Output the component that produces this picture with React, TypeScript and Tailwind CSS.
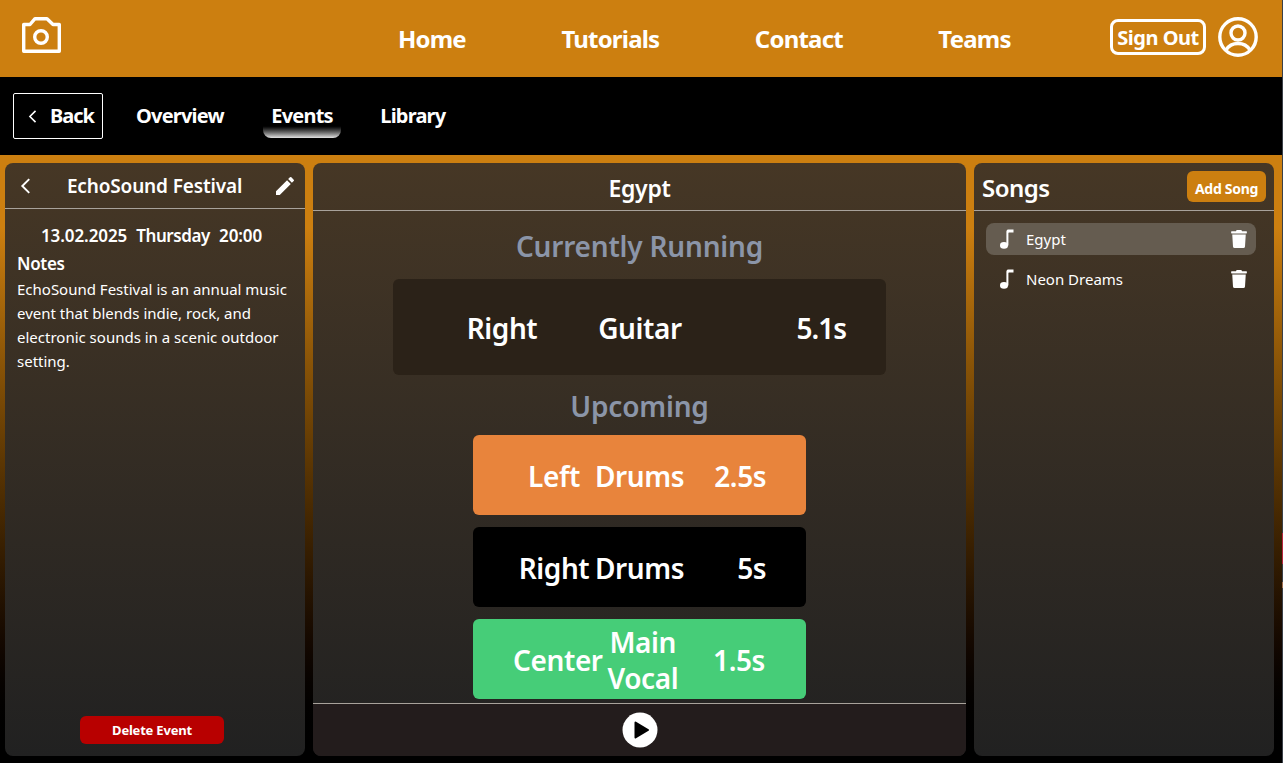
import { MdEdit } from "react-icons/md"
import { FaTrash } from "react-icons/fa"

const FONT = "font-['Noto_Sans','Open_Sans',sans-serif]"

const NAV = ["Home", "Tutorials", "Contact", "Teams"]
const TABS = ["Overview", "Events", "Library"]

const UPCOMING = [
  { side: "Left", part: "Drums", time: "2.5s", color: "bg-[#E8843C]" },
  { side: "Right", part: "Drums", time: "5s", color: "bg-black" },
  { side: "Center", part: "Main Vocal", time: "1.5s", color: "bg-[#46CD78]" },
]

const SONGS = [
  { name: "Egypt", active: true },
  { name: "Neon Dreams", active: false },
]

function CameraIcon() {
  return (
    <svg className="mb-[3px]" width="42" height="40" viewBox="0 0 42 40" fill="none" stroke="white" strokeWidth="3.4" strokeLinejoin="round">
      <path d="M3.7 7.5 H10 L15 1.7 H27 L33 7.5 H39.3 V34.2 H3.7 Z" />
      <circle cx="21" cy="20" r="6.3" />
    </svg>
  )
}

function UserIcon() {
  return (
    <svg className="mb-[3px]" width="40" height="40" viewBox="0 0 40 40" fill="none" stroke="white" strokeWidth="3.4">
      <circle cx="20" cy="20" r="18.2" />
      <circle cx="20" cy="16" r="7" />
      <path d="M8 33 C11 28 15 26.5 20 26.5 C25 26.5 29 28 32 33" />
    </svg>
  )
}

function NoteIcon() {
  return (
    <svg width="16" height="20" viewBox="0 0 16 20" fill="white">
      <ellipse cx="5" cy="16.4" rx="4" ry="3.3" />
      <path d="M7.4 2.5 C7.4 1 8.4 0.4 9.6 0.4 L14.5 0.4 L14.5 3.6 L10 3.6 C9.6 3.6 9.4 3.9 9.4 4.3 L9.4 16.4 L7.4 16.4 Z" />
    </svg>
  )
}

function PlayIcon() {
  return (
    <svg width="36" height="36" viewBox="0 0 36 36">
      <circle cx="18" cy="18" r="17.5" fill="white" />
      <path d="M13.5 10.5 L26 18 L13.5 25.5 Z" fill="black" stroke="black" strokeWidth="2" strokeLinejoin="round" />
    </svg>
  )
}

function Chevron({ w, h }: { w: number; h: number }) {
  return (
    <svg width={w} height={h} viewBox="0 0 10 15" fill="none" stroke="white" strokeWidth="1.8">
      <path d="M8.5 1 L2 7.5 L8.5 14" />
    </svg>
  )
}

function Header() {
  return (
    <header className="flex h-[77px] items-center bg-[#CC7F10] pl-5 pr-6 text-white">
      <CameraIcon />
      <nav className="ml-[336px] flex gap-[95.5px] text-2xl font-bold tracking-[-0.8px]">
        {NAV.map((item) => (
          <span key={item}>{item}</span>
        ))}
      </nav>
      <button className="ml-auto mb-[3px] h-9 w-24 rounded-lg border-[3.5px] border-white pt-px text-xl leading-none font-bold tracking-[-0.5px]">
        Sign Out
      </button>
      <span className="ml-3">
        <UserIcon />
      </span>
    </header>
  )
}

function SubNav() {
  return (
    <div className="flex h-[78px] items-center bg-black pl-[13px] text-white">
      <button className="flex h-[46px] w-[90px] items-center gap-[13px] rounded-[2px] border border-white pl-[14px] text-xl font-bold tracking-[-1px]">
        <Chevron w={9} h={13} />
        Back
      </button>
      <div className="ml-[33px] flex items-center gap-[47.5px] text-xl font-bold tracking-[-0.8px]">
        {TABS.map((tab) => (
          <div key={tab} className="relative">
            {tab}
            {tab === "Events" && (
              <div className="absolute -left-2 -right-2 top-[23px] h-[13px] rounded-b-lg bg-gradient-to-b from-black to-[#E4E4E4]" />
            )}
          </div>
        ))}
      </div>
    </div>
  )
}

function EventPanel() {
  return (
    <aside className="flex w-[300px] flex-col rounded-lg bg-gradient-to-b from-[#463725] to-[#212121] text-white">
      <div className="flex h-[46px] items-center justify-between border-b border-[#A8A29B] pl-[15px] pr-2">
        <Chevron w={11} h={16} />
        <span className="ml-[5px] pt-0.5 text-[19px] font-semibold tracking-[-0.15px]">EchoSound Festival</span>
        <MdEdit size={24} />
      </div>
      <div className="flex gap-[9px] pl-9 pt-[15px] text-[17px] leading-6 font-semibold tracking-[-0.1px]">
        <span>13.02.2025</span>
        <span className="tracking-[-0.4px]">Thursday</span>
        <span>20:00</span>
      </div>
      <div className="px-3 pt-1">
        <p className="text-[17px] leading-6 font-semibold tracking-[-0.3px]">Notes</p>
        <p className="mt-px text-[15px] leading-6">
          EchoSound Festival is an annual music event that blends indie, rock, and electronic sounds in a scenic outdoor setting.
        </p>
      </div>
      <button className="mt-auto mb-3 ml-[75px] h-7 w-36 rounded-md bg-[#B80000] pt-px text-[13px] font-bold tracking-[-0.2px]">
        Delete Event
      </button>
    </aside>
  )
}

function StagePanel() {
  return (
    <main className="flex flex-1 flex-col overflow-hidden rounded-lg bg-gradient-to-b from-[#463725] to-[#212121] text-white">
      <div className="flex h-12 items-center justify-center border-b border-[#A8A29B] pt-1 text-[23px] font-semibold tracking-[-0.3px]">
        Egypt
      </div>
      <div className="flex flex-1 flex-col items-center overflow-hidden">
        <h2 className="mt-[14px] text-[28px] leading-[42px] font-semibold tracking-[-0.2px] text-[#8B95A8]">Currently Running</h2>
        <div className="mt-3 flex h-24 w-[493px] items-center rounded-md bg-[#2B2218] pt-0.5 pr-10 pl-[73px] text-[28px] font-semibold tracking-[-0.4px]">
          <span className="w-[72px] text-center">Right</span>
          <span className="ml-[60px] w-[84px] text-center">Guitar</span>
          <span className="ml-auto tracking-[-1px]">5.1s</span>
        </div>
        <h2 className="mt-[10px] text-[28px] leading-[42px] font-semibold tracking-[-0.2px] text-[#8B95A8]">Upcoming</h2>
        <div className="mt-2 flex flex-col gap-3">
          {UPCOMING.map((row) => (
            <div key={row.side + row.part} className={`${row.color} flex h-20 w-[333px] items-center rounded-md pt-0.5 pr-[41px] pl-10 text-[28px] leading-9 font-semibold tracking-[-0.4px]`}>
              <span className="min-w-[82px] text-center">{row.side}</span>
              <span className="flex-1 text-center">{row.part}</span>
              <span className="w-[82px] shrink-0 text-right">{row.time}</span>
            </div>
          ))}
        </div>
      </div>
      <div className="flex h-[53px] items-center justify-center border-t border-[#A8A29B] bg-[#231C1C]">
        <PlayIcon />
      </div>
    </main>
  )
}

function SongsPanel() {
  return (
    <aside className="flex w-[300px] flex-col rounded-lg bg-gradient-to-b from-[#463725] to-[#212121] text-white">
      <div className="flex h-12 items-center justify-between border-b border-[#A8A29B] pl-2 pr-2">
        <span className="pt-0.5 text-2xl font-semibold tracking-[-0.5px]">Songs</span>
        <button className="h-[31px] w-[79px] rounded-md bg-[#CC7F10] pt-1 text-sm font-bold tracking-[-0.3px]">Add Song</button>
      </div>
      <div className="flex flex-col gap-2 pt-3 pl-3">
        {SONGS.map((song) => (
          <div key={song.name} className={`flex h-8 w-[270px] items-center rounded-lg pl-[13px] pr-2 text-[15px] ${song.active ? "bg-[#655C50]" : ""}`}>
            <NoteIcon />
            <span className="ml-[11px]">{song.name}</span>
            <FaTrash size={18} className="ml-auto" />
          </div>
        ))}
      </div>
    </aside>
  )
}

export default function App() {
  return (
    <div className={`${FONT} relative h-[763px] w-full overflow-hidden bg-[#3A4048]`}>
      <div className="flex h-full w-[1282px] flex-col bg-black">
        <Header />
        <SubNav />
        <div className="flex flex-1 gap-2 bg-gradient-to-b from-[#CC7F10] from-[12%] to-black pt-2 pr-2 pb-[7px] pl-[5px]">
          <EventPanel />
          <StagePanel />
          <SongsPanel />
        </div>
      </div>
      {/* sliver of something behind the page at the right edge */}
      <div className="absolute top-[533px] right-0 h-[31px] w-px bg-[#B8243F]" />
      <div className="absolute top-[582px] right-0 h-[6px] w-px bg-[#A07050]" />
    </div>
  )
}
